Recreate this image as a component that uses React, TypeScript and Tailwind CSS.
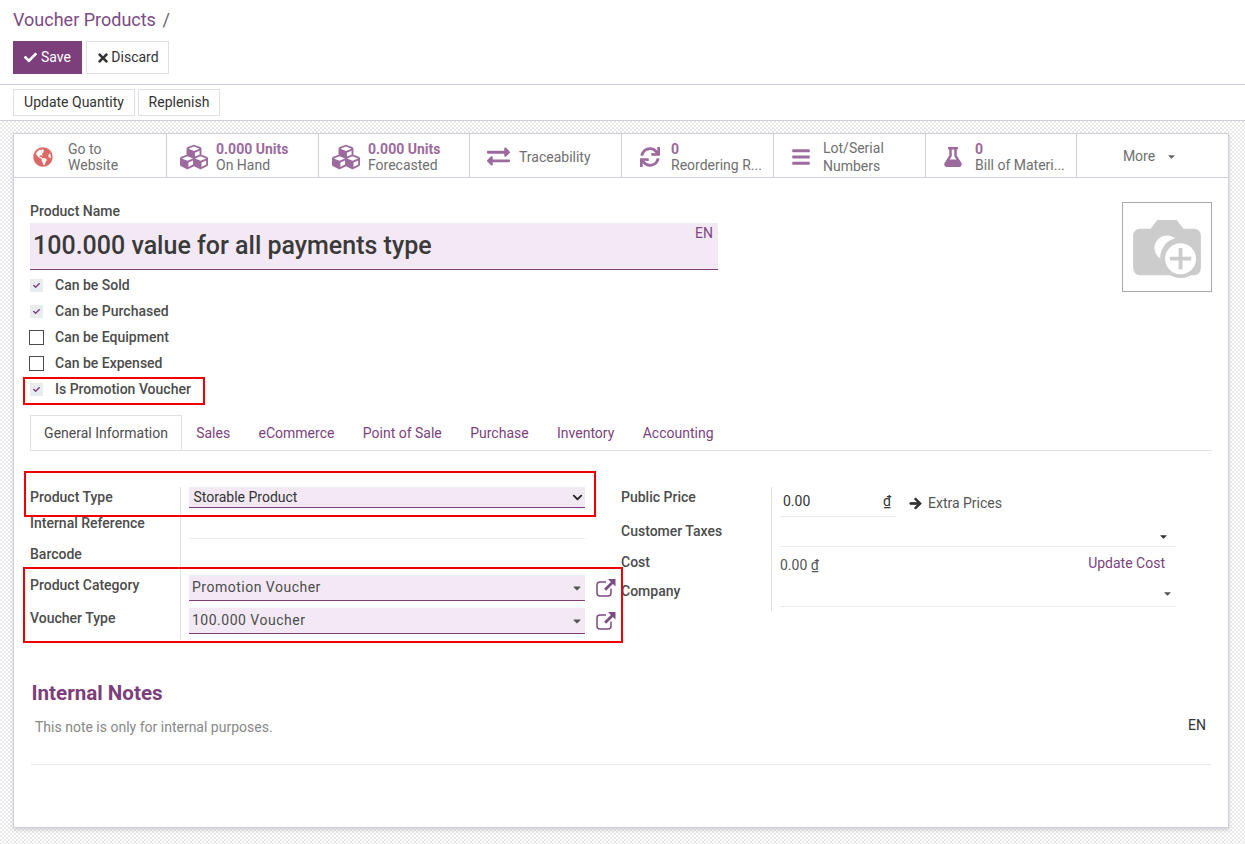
import React from "react";
import { FaCheck, FaTimes, FaGlobeAmericas, FaCubes, FaExchangeAlt, FaSync, FaBars, FaFlask, FaArrowRight, FaCaretDown, FaChevronDown } from "react-icons/fa";

const PURPLE = "text-[#7c3f7c]";

function ExternalLink() {
    return (
        <svg width="20" height="20" viewBox="0 0 20 20" className="text-[#7c4a84]">
            <path d="M15 10.5v4.5a3 3 0 0 1-3 3H4a3 3 0 0 1-3-3V7a3 3 0 0 1 3-3h6" fill="none" stroke="currentColor" strokeWidth="1.5" />
            <path d="M12 1h7.5v7.5l-2.6-2.6-6.8 6.8-2-2 6.8-6.8z" fill="currentColor" />
        </svg>
    );
}

function Stat({ icon, top, bottom, strong, width, pad, gap, leading = "leading-[16px]" }: { icon: React.ReactNode; top: string; bottom?: string; strong?: boolean; width: string; pad: string; gap: string; leading?: string }) {
    return (
        <div className={`${width} shrink-0 h-full pt-[2px] flex items-center ${pad} ${gap} border-r border-[#ced0da] min-w-0`}>
            <span className="w-[28px] flex justify-center shrink-0 text-[#9c6a9c]">{icon}</span>
            <div className={`${leading} text-[14px] text-[#6f6f6f] whitespace-nowrap`}>
                <div className={strong ? "font-bold text-[#9c6a9c]" : ""}>{top}</div>
                {bottom && <div>{bottom}</div>}
            </div>
        </div>
    );
}

function Check({ label, checked }: { label: string; checked?: boolean }) {
    return (
        <div className="h-[26px] flex items-center">
            <span className="w-[13px] flex items-center justify-center">
                {checked ? (
                    <span className="w-[13px] h-[13px] shrink-0 bg-[#e9ecef] flex items-center justify-center text-[#7c3f7c]">
                        <FaCheck size={7} />
                    </span>
                ) : (
                    <span className="w-[15px] h-[15px] shrink-0 border-[1.5px] border-[#4c4c4c] bg-white" />
                )}
            </span>
            <span className="ml-[12px] font-medium text-[#4c4c4c]">{label}</span>
        </div>
    );
}

function Label({ children, className = "" }: { children: React.ReactNode; className?: string }) {
    return <div className={`font-medium text-[#4c4c4c] ${className}`}>{children}</div>;
}

function ComboField({ value }: { value: string }) {
    return (
        <div className="flex items-center w-[440px]">
            <div className="w-[396px] shrink-0 h-[26px] bg-[#f3e9f4] border-b border-[#7c3f7c] flex items-center justify-between pl-[3px] pr-[2px] text-[#4c4c4c]">
                <span className="tracking-[0.5px]">{value}</span>
                <FaCaretDown size={12} className="text-[#555]" />
            </div>
            <span className="ml-[11px] shrink-0"><ExternalLink /></span>
        </div>
    );
}

const tabs = ["Sales", "eCommerce", "Point of Sale", "Purchase", "Inventory", "Accounting"];

export default function App() {
    return (
        <div className="relative w-[1245px] h-[844px] overflow-hidden bg-white text-[14px] text-[#4c4c4c] font-['Roboto',sans-serif]">
            <div className="h-[85px] border-b border-[#ced0da] pl-[13px] pt-[8px]">
                <div className="text-[18px] leading-[24px] text-[#7c4a84]">
                    Voucher Products <span className="ml-[2px] text-[#666]">/</span>
                </div>
                <div className="flex gap-[4px] mt-[9px]">
                    <button className="w-[69px] h-[33px] bg-[#7c3f7c] text-white flex items-center justify-center gap-[4px]">
                        <FaCheck size={13} /> Save
                    </button>
                    <button className="w-[83px] h-[33px] bg-white border border-[#dee2e6] text-[#333] flex items-center justify-center gap-[1px]">
                        <FaTimes size={14} /> Discard
                    </button>
                </div>
            </div>
            <div className="h-[36px] border-b border-[#ced0da] pl-[13px] pt-[4px] flex gap-[3px] text-[#333]">
                <button className="w-[122px] h-[27px] border border-[#dee2e6]">Update Quantity</button>
                <button className="w-[82px] h-[27px] border border-[#dee2e6]">Replenish</button>
            </div>

            <div className="h-[723px] pt-[12px] pl-[13px] bg-[#f6f6f6] bg-[repeating-conic-gradient(#e9e9e9_0%_25%,#ffffff_0%_50%)] bg-[length:4px_4px]">
                <div className="relative w-[1216px] h-[695px] bg-white border border-[#ced0da] shadow-[0_2px_4px_rgba(0,0,0,0.15)]">
                    <div className="h-[44px] flex border-b border-[#ced0da]">
                        <Stat width="w-[153px]" icon={<FaGlobeAmericas size={20} className="text-[#dc6965]" />} top="Go to" bottom="Website" pad="pl-[15px]" gap="gap-[11px]" />
                        <Stat width="w-[152px]" icon={<FaCubes size={28} />} strong top="0.000 Units" bottom="On Hand" pad="pl-[13px]" gap="gap-[8px]" />
                        <Stat width="w-[151px]" icon={<FaCubes size={28} />} strong top="0.000 Units" bottom="Forecasted" pad="pl-[13px]" gap="gap-[8px]" />
                        <Stat width="w-[152px]" icon={<FaExchangeAlt size={23} />} top="Traceability" pad="pl-[14px]" gap="gap-[7px]" />
                        <Stat width="w-[152px]" icon={<FaSync size={20} />} strong top="0" bottom="Reordering R..." pad="pl-[14px]" gap="gap-[7px]" />
                        <Stat width="w-[152px]" icon={<FaBars size={20} />} top="Lot/Serial" bottom="Numbers" pad="pl-[13px]" gap="gap-[8px]" leading="leading-[18px]" />
                        <Stat width="w-[151px]" icon={<FaFlask size={20} />} strong top="0" bottom="Bill of Materi..." pad="pl-[13px]" gap="gap-[8px]" />
                        <div className="flex-1 h-full pt-[2px] pr-[5px] flex items-center justify-center gap-[11px] text-[#6f6f6f]">
                            More <FaCaretDown size={11} className="text-[#666]" />
                        </div>
                    </div>

                    <div className="pl-[16px] pr-[16px] relative">
                        <div className="absolute right-[16px] top-[24px] w-[90px] h-[90px] border border-[#a9a9a9] flex items-center justify-center">
                            <svg width="68" height="60" viewBox="0 0 70 62" className="mt-[3px] -ml-[1px]">
                                <path d="M18 10l7-9h20l7 9h11a7 7 0 0 1 7 7v34a7 7 0 0 1-7 7H7a7 7 0 0 1-7-7V17a7 7 0 0 1 7-7z" fill="#cccccc" />
                                <circle cx="35" cy="30" r="13" fill="#ffffff" />
                                <circle cx="49" cy="40" r="21" fill="#cccccc" />
                                <circle cx="49" cy="41" r="16" fill="#ffffff" />
                                <path d="M47 30h4v9h9v4h-9v9h-4v-9h-9v-4h9z" fill="#cccccc" />
                            </svg>
                        </div>

                        <Label className="pt-[23px] leading-[20px]">Product Name</Label>
                        <div className="w-[688px] h-[47px] mt-[2px] bg-[#f3e9f4] border-b border-[#7c3f7c] flex justify-between pl-[3px] pr-[5px]">
                            <span className="text-[25px] font-medium text-[#3a3a3a] leading-[46px]">100.000 value for all payments type</span>
                            <span className="text-[#7c4a84] leading-[20px]">EN</span>
                        </div>

                        <div className="pt-[2px]">
                            <Check label="Can be Sold" checked />
                            <Check label="Can be Purchased" checked />
                            <Check label="Can be Equipment" />
                            <Check label="Can be Expensed" />
                            <Check label="Is Promotion Voucher" checked />
                        </div>

                        <div className="mt-[14px] w-[1182px] h-[35px] border-b border-[#dee2e6] flex items-end">
                            <div className="w-[152px] h-[35px] pt-[1px] border border-[#dee2e6] border-b-white flex items-center justify-center text-[#4c4c4c]">General Information</div>
                            {tabs.map(t => (
                                <div key={t} className={`h-[35px] pt-[2px] px-[14.2px] flex items-center ${PURPLE}`}>{t}</div>
                            ))}
                        </div>

                        <div className="flex mt-[36px]">
                            <div className="w-[591px] grid grid-cols-[150px_441px]">
                                <Label className="h-[30px] leading-[20px]">Product Type</Label>
                                <div className="border-l border-[#dee2e6] pl-[8px] h-[30px]">
                                    <div className="w-[396px] h-[21px] bg-[#f3e9f4] border-b border-[#7c3f7c] flex items-center justify-between pl-[4.5px] pr-[2px] text-[#333]">
                                        Storable Product
                                        <FaChevronDown size={11} className="text-[#222]" />
                                    </div>
                                </div>
                                <Label className="h-[30px] -mt-[4px] leading-[20px]">Internal Reference</Label>
                                <div className="border-l border-[#dee2e6] pl-[8px] h-[30px] -mt-[4px]">
                                    <div className="w-[396px] h-[26px] border-b border-[#e9ecef]" />
                                </div>
                                <Label className="h-[32px] leading-[22px]">Barcode</Label>
                                <div className="border-l border-[#dee2e6] pl-[8px] h-[32px]" />
                                <Label className="h-[33px] leading-[20px]">Product Category</Label>
                                <div className="border-l border-[#dee2e6] pl-[8px] h-[33px]">
                                    <ComboField value="Promotion Voucher" />
                                </div>
                                <Label className="h-[31px] leading-[20px]">Voucher Type</Label>
                                <div className="border-l border-[#dee2e6] pl-[8px] h-[31px]">
                                    <ComboField value="100.000 Voucher" />
                                </div>
                            </div>

                            <div className="w-[150px] leading-[20px]">
                                <Label className="h-[34px]">Public Price</Label>
                                <Label className="h-[31px]">Customer Taxes</Label>
                                <Label className="h-[29px]">Cost</Label>
                                <Label>Company</Label>
                            </div>
                            <div className="w-[405px] h-[124px] border-l border-[#dee2e6] pl-[8px]">
                                <div className="h-[30px] flex items-center">
                                    <div className="w-[116px] h-[29px] border-b border-[#e9ecef] flex justify-between items-center pl-[3px] pr-[5px] text-[#333]">
                                        <span>0.00</span><span className="underline">₫</span>
                                    </div>
                                    <span className="ml-[13px] pt-[2px] flex items-center gap-[6px]"><FaArrowRight size={13} className="text-[#333] [stroke-width:30px]" /><span className="text-[#555]">Extra Prices</span></span>
                                </div>
                                <div className="w-[396px] h-[30px] border-b border-[#e9ecef] flex justify-end items-center pr-[7px]">
                                    <FaCaretDown size={11} className="text-[#333] mt-[10px]" />
                                </div>
                                <div className="w-[385px] h-[30px] flex items-start justify-between">
                                    <span className="text-[#555] mt-[8px]">0.00 <span className="underline">₫</span></span>
                                    <span className={`${PURPLE} mt-[6px]`}>Update Cost</span>
                                </div>
                                <div className="w-[396px] h-[30px] border-b border-[#e9ecef] flex justify-end items-center pr-[3px]">
                                    <FaCaretDown size={11} className="text-[#555] mt-[4px]" />
                                </div>
                            </div>
                        </div>

                        <div className="mt-[40px] pl-[1.5px] text-[20.6px] font-bold text-[#7c3f7c] leading-[28px]">Internal Notes</div>
                        <div className="mt-[10px] w-[1180px] ml-[1px] h-[48px] border-b border-[#e9ecef] flex justify-between pl-[4px] pr-[5px]">
                            <span className="text-[#888] leading-[20px]">This note is only for internal purposes.</span>
                            <span className="text-[#333] -mt-[2px] leading-[20px]">EN</span>
                        </div>
                    </div>
                </div>
            </div>

            {/* red annotation boxes */}
            <div className="absolute left-[23px] top-[377px] w-[182px] h-[28px] border-2 border-[#f00000]" />
            <div className="absolute left-[24px] top-[471px] w-[572px] h-[46px] border-2 border-[#f00000]" />
            <div className="absolute left-[23px] top-[567px] w-[600px] h-[76px] border-2 border-[#f00000]" />
        </div>
    );
}
